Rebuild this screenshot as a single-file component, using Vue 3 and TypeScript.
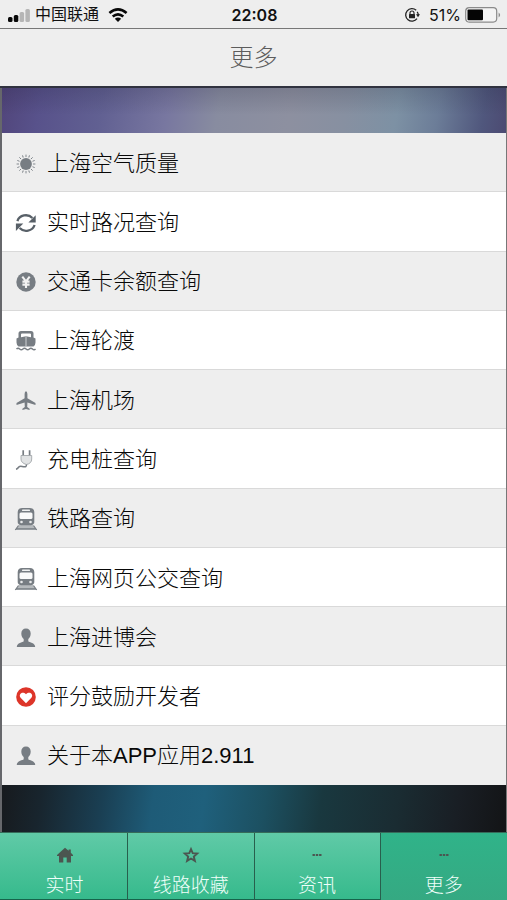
<script setup lang="ts">
import { ref } from 'vue'

interface MenuItem {
  icon: string
  label: string
}

const items: MenuItem[] = [
  { icon: 'sun', label: '上海空气质量' },
  { icon: 'refresh', label: '实时路况查询' },
  { icon: 'yen', label: '交通卡余额查询' },
  { icon: 'ship', label: '上海轮渡' },
  { icon: 'plane', label: '上海机场' },
  { icon: 'plug', label: '充电桩查询' },
  { icon: 'train', label: '铁路查询' },
  { icon: 'train', label: '上海网页公交查询' },
  { icon: 'person', label: '上海进博会' },
  { icon: 'heart', label: '评分鼓励开发者' },
  { icon: 'person', label: '关于本APP应用2.911' },
]

const tabs: MenuItem[] = [
  { icon: 'home', label: '实时' },
  { icon: 'star', label: '线路收藏' },
  { icon: 'dots', label: '资讯' },
  { icon: 'dots', label: '更多' },
]
const current = ref(3)
const rays = Array.from({ length: 16 }, (_, i) => i * 22.5)
</script>

<template>
  <div class="page">
    <div class="status">
      <div class="carrier">
        <svg class="signal" viewBox="0 0 22 14">
          <rect x="0" y="9" width="4.5" height="5" rx="1.5" />
          <rect x="5.8" y="7" width="4.5" height="7" rx="1.5" />
          <rect class="off" x="11.6" y="4" width="4.5" height="10" rx="1.5" />
          <rect class="off" x="17.4" y="1" width="4.5" height="13" rx="1.5" />
        </svg>
        <span>中国联通</span>
        <svg class="wifi" viewBox="0 0 20 14">
          <g fill="none" stroke="#080808" stroke-width="2.6">
            <path d="M1.4 5.1Q10-2.3 18.6 5.1" />
            <path d="M4.7 8.6Q10 4.2 15.3 8.6" />
          </g>
          <path d="M6.8 10.7Q10 8.2 13.2 10.7L10 13.9Z" fill="#080808" />
        </svg>
      </div>
      <div class="clock">22:08</div>
      <div class="power">
        <svg class="lock" viewBox="0 0 16 16">
          <g fill="none" stroke="#222">
            <path d="M12.2 3.2A6.3 6.3 0 1 0 13 11.7M13.2 4.8A6.3 6.3 0 0 1 14.3 8" stroke-width="1.3" />
            <path d="M6 7.4V6a2 2 0 0 1 4 0v1.4" stroke-width="1.1" />
          </g>
          <rect x="5" y="7" width="6" height="4.3" rx=".6" fill="#222" />
          <path d="M12 7.3h4L14 10.2Z" fill="#222" />
        </svg>
        <span>51%</span>
        <svg class="battery" viewBox="0 0 36 16">
          <rect x=".7" y=".7" width="31" height="14.4" rx="3.5" fill="#f4f4f4" stroke="#8b8b8b" stroke-width="1.2" />
          <rect x="2.5" y="2.6" width="15.5" height="10.6" rx="1" fill="#050505" />
          <path d="M33.6 5.5Q36.6 8 33.6 10.5Z" fill="#8b8b8b" />
        </svg>
      </div>
    </div>

    <header class="header"><h1>更多</h1></header>

    <main class="content">
      <ul class="menu">
        <li v-for="item in items" :key="item.label">
          <button type="button" class="row">
            <svg class="icon" viewBox="0 0 24 24" aria-hidden="true">
              <g v-if="item.icon === 'sun'">
                <circle cx="12" cy="12" r="5.9" />
                <path
                  v-for="angle in rays"
                  :key="angle"
                  d="M12 2.6V5"
                  class="line"
                  stroke-width=".9"
                  :transform="`rotate(${angle} 12 12)`"
                />
              </g>
              <g v-else-if="item.icon === 'refresh'">
                <path d="M3.4 10.2A8.8 8.2 0 0 1 18.4 7M20.6 14A8.8 8.2 0 0 1 5.6 17" class="line dark" stroke-width="2.3" />
                <path d="M21.7 4.2V11.6H14.4ZM1.9 20V12.6H9.3Z" class="dark-fill" />
              </g>
              <g v-else-if="item.icon === 'yen'">
                <circle cx="12" cy="12" r="9.7" />
                <path d="M8.3 6.6 12 11.3l3.7-4.7M12 11V18M8.4 11.6h7.2M8.4 14.6h7.2" fill="none" stroke="#f2f2f2" stroke-width="2.1" />
              </g>
              <g v-else-if="item.icon === 'ship'">
                <path d="M4.5 8.5V4.5Q4.5 2 7 2h10q2.500 0 2.500 2.500v4L21.500 9.500v4q0 2.500-2 4h-15q-2-1.500-2-4v-4ZM7 8.300 12 7.200l5 1.100V5.500q0-1-1-1H8q-1 0-1 1Z" fill-rule="evenodd" />
                <path d="M12 7.500v10" stroke="#d7dadd" stroke-width=".9" />
                <path d="M2.500 20q1.600-1.500 3.200 0t3.200 0 3.200 0 3.200 0 3.200 0 3 0" class="line" stroke-width="1.500" />
              </g>
              <g v-else-if="item.icon === 'plane'">
                <path d="M12 2.200q1.300 0 1.400 2.800v4.200L21.500 14v2L13.400 13.400 13.200 18l2.400 1.700v1.300L12 20l-3.600 1v-1.300L10.800 18l-.2-4.600L2.500 16v-2l8.100-4.800V5q.1-2.800 1.400-2.800Z" />
              </g>
              <g v-else-if="item.icon === 'plug'">
                <path d="M9.200 2.200V8M15.600 2.200V8" class="line" stroke-width="1.700" />
                <path d="M7 7.500H17.700V11q0 4.500-5.300 5.500Q7 15 7 11Z" fill="#e1e3e4" stroke="#a3a7aa" stroke-width=".9" />
                <path d="M12.500 16.500Q12.500 19.500 9.600 18.700 6 17.500 4.800 19 3.500 21 2 21.200" class="line" stroke-width="1.500" />
              </g>
              <g v-else-if="item.icon === 'train'">
                <path d="M6.300 16.500H17.700L23 23H1Z" fill="#b6babd" />
                <path d="M4.500 18.500 1.300 23M19.500 18.500 22.700 23M2.500 21.800H21.500" class="line" stroke-width="1.200" />
                <path d="M8 1h8q4 0 4.300 4v10q0 2.500-3.300 3.300H7q-3.300-.8-3.300-3.300V5Q4 1 8 1Z" />
                <rect x="8" y="2.600" width="8" height="1.500" rx=".7" fill="#f0f1f1" />
                <rect x="5.500" y="5.600" width="13" height="6.500" rx="1.500" fill="#fafafa" />
                <circle cx="7.500" cy="15" r="1.300" fill="#e9eaeb" />
                <circle cx="16.500" cy="15" r="1.300" fill="#e9eaeb" />
              </g>
              <g v-else-if="item.icon === 'heart'">
                <circle cx="12" cy="12" r="9.800" fill="#dd3529" />
                <path d="M12 18.300 6.600 12.700C4 9.800 8.200 5.500 12 9.300c3.800-3.800 8 .5 5.400 3.400Z" fill="#fff" />
              </g>
              <g v-else>
                <path d="M12 2.500c3 0 4.700 2 4.700 5 0 2.500-1 4.300-2.400 5.400v2.300c1 1.300 6.900 1.300 6.900 5.800H2.800c0-4.500 5.900-4.500 6.900-5.800v-2.300C8.300 11.800 7.300 10 7.300 7.500c0-3 1.700-5 4.700-5Z" />
              </g>
            </svg>
            <span>{{ item.label }}</span>
          </button>
        </li>
      </ul>
    </main>

    <nav class="tabs">
      <button
        v-for="(tab, index) in tabs"
        :key="tab.label"
        type="button"
        :class="['tab', { active: index === current }]"
        @click="current = index"
      >
        <svg class="tab-icon" viewBox="0 0 18 18" aria-hidden="true">
          <path v-if="tab.icon === 'home'" d="M9 1.700 12.600 4.800V3.600h2.200v3.200L17 8.900V10H15V16.500H10.700V11.500H7.300V16.500H3V10H1V8.900Z" />
          <path v-else-if="tab.icon === 'star'" d="M9 3.200 10.700 7.200 15.200 7.600 11.800 10.500 12.900 14.900 9 12.500 5.100 14.900 6.200 10.500 2.800 7.600 7.300 7.200Z" fill="none" stroke="#4b5650" stroke-width="1.900" />
          <g v-else>
            <rect x="4.500" y="8" width="2.400" height="2" />
            <rect x="7.800" y="8" width="2.400" height="2" />
            <rect x="11.100" y="8" width="2.400" height="2" />
          </g>
        </svg>
        <span>{{ tab.label }}</span>
      </button>
    </nav>
  </div>
</template>

<style>
body {
  margin: 0;
}
</style>

<style scoped>
.page {
  display: flex;
  flex-direction: column;
  min-height: 100vh;
  background: #eee;
  color: #222;
  font-family: "Liberation Sans", "Noto Sans CJK SC", sans-serif;
  font-weight: 300;
}
.status {
  display: grid;
  grid-template-columns: 1fr auto 1fr;
  align-items: center;
  box-sizing: border-box;
  height: 29px;
  padding: 1px 6px 0 8px;
  border-bottom: 1px solid #777;
  font-size: 16px;
  line-height: 20px;
  color: #111;
}
.carrier,
.power {
  display: flex;
  align-items: center;
}
.carrier {
  gap: 5px;
  font-weight: 400;
}
.signal {
  width: 22px;
  height: 14px;
  fill: #080808;
}
.signal .off {
  fill: #b5b5b5;
}
.wifi {
  width: 20px;
  height: 14px;
  margin-left: 4px;
}
.clock {
  font-family: Inter, sans-serif;
  font-weight: 600;
}
.power {
  justify-content: flex-end;
  gap: 4px;
  font-family: Inter, sans-serif;
  font-weight: 400;
}
.lock {
  width: 16px;
  height: 16px;
  margin-right: 5px;
}
.battery {
  width: 36px;
  height: 16px;
}
.header {
  display: flex;
  align-items: center;
  justify-content: center;
  box-sizing: border-box;
  height: 59px;
  border-bottom: 2px solid #30323f;
}
h1 {
  margin: 0;
  color: #5c5c5c;
  font-size: 24px;
  font-weight: 300;
  line-height: 36px;
}
.content {
  display: flex;
  flex: 1;
  flex-direction: column;
  padding: 45px 0 47px;
  border-right: 1px solid #777;
  border-left: 2px solid #66676b;
  background:
    linear-gradient(180deg, rgb(20 20 40 / 16%), transparent 60%) top / 100% 45px no-repeat,
    linear-gradient(100deg, #51457b 0%, #58528b 8%, #616092 20%, #7877a0 33%, #888ca0 43%, #8d90a0 57%, #8790a1 68%, #7d91a4 78%, #6c7d98 86%, #50577d 95%, #4c4a72 100%) top / 100% 45px no-repeat,
    linear-gradient(98deg, #171a1e 0%, #18252e 8%, #1a3f53 20%, #1e5b77 30%, #1f607c 40%, #1c5061 52%, #19383f 63%, #1a2c32 78%, #191e24 90%, #131416 100%) bottom / 100% 47px no-repeat;
}
.menu {
  display: grid;
  flex: 1;
  grid-auto-rows: 1fr;
  margin: 0;
  padding: 0;
  list-style: none;
}
.menu li {
  display: flex;
  border-bottom: 1px solid #d9d9d9;
  background: #eee;
}
.menu li:nth-child(even) {
  background: #fff;
}
.menu li:last-child {
  border-bottom-color: #eee;
}
.row {
  display: flex;
  flex: 1;
  align-items: center;
  gap: 9px;
  padding: 3px 12px 0;
  border: 0;
  background: none;
  color: #080808;
  font: inherit;
  font-size: 22px;
  line-height: 32px;
  text-align: left;
}
.icon {
  width: 24px;
  height: 24px;
  fill: #777d83;
}
.line {
  fill: none;
  stroke: #777d83;
}
.dark {
  stroke: #586068;
}
.dark-fill {
  fill: #586068;
}
.tabs {
  display: grid;
  grid-template-columns: repeat(4, 1fr);
  box-sizing: border-box;
  height: 68px;
  padding-left: 2px;
  border-top: 1px solid #356b59;
  border-bottom: 1px solid #17644b;
  background: linear-gradient(#60caa7, #36ba8c);
}
.tab {
  display: flex;
  flex-direction: column;
  align-items: center;
  gap: 8px;
  padding: 13px 0 0;
  border: 0;
  border-right: 1px solid #285f4d;
  background: none;
  color: #f0fffa;
  font: inherit;
  font-size: 19px;
  line-height: 28px;
}
.tab:last-child {
  border-right: 0;
}
.tab.active {
  background: linear-gradient(#30b389, #35a982);
}
.tab-icon {
  width: 18px;
  height: 18px;
  fill: #4b5650;
}
</style>
